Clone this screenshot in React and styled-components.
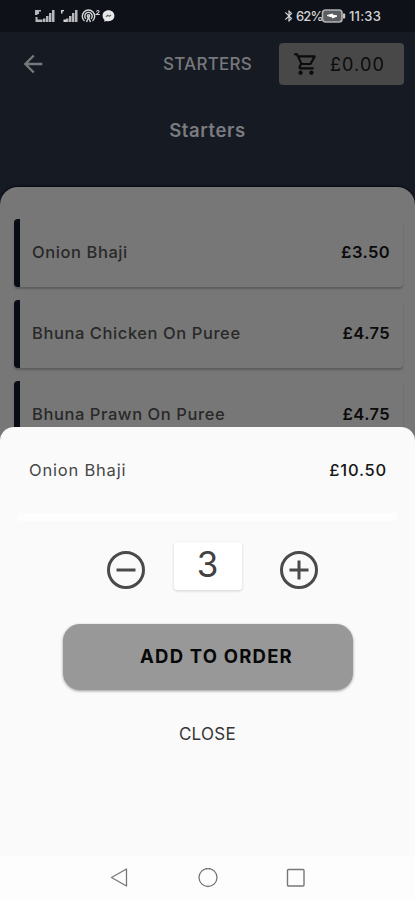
import React, { useState } from 'react';
import styled, { createGlobalStyle } from 'styled-components';
import { MdArrowBack, MdOutlineShoppingCart, MdBluetooth } from 'react-icons/md';

const GlobalStyle = createGlobalStyle`
  * {
    box-sizing: border-box;
  }

  body {
    margin: 0;
    font-family: Inter, "Liberation Sans", sans-serif;
  }

  button {
    font-family: inherit;
    border: none;
    padding: 0;
    cursor: pointer;
  }
`;

const Screen = styled.div`
  position: relative;
  width: 415px;
  height: 900px;
  overflow: hidden;
  background-color: #161a23;
`;

const StatusBar = styled.div`
  display: flex;
  justify-content: space-between;
  align-items: center;
  height: 32px;
  padding: 0 31px 0 34px;
  background-color: #0e1118;
  color: #d4d5d7;
`;

const StatusGroup = styled.div`
  display: flex;
  align-items: center;
`;

const StatusText = styled.span`
  width: ${props => props.$width};
  font-size: 13px;
  line-height: 16px;
  font-weight: 500;
  letter-spacing: ${props => props.$spacing};
  white-space: nowrap;
`;

const Navbar = styled.nav`
  display: flex;
  align-items: center;
  height: 64px;
  padding: 0 11px 0 19px;
  color: #77787c;
`;

const BackButton = styled.button`
  display: flex;
  background: none;
  color: #77787c;
`;

const NavTitle = styled.span`
  flex: 1;
  padding-right: 27px;
  text-align: right;
  font-size: 17px;
  font-weight: 500;
  letter-spacing: 0.25px;
`;

const CartButton = styled.button`
  display: flex;
  align-items: center;
  gap: 11px;
  width: 125px;
  height: 42px;
  padding-left: 14px;
  border-radius: 4px;
  background-color: #484848;
  color: #0b0b0c;
  font-size: 18px;
  letter-spacing: 1.1px;
`;

const PageTitle = styled.h2`
  height: 91px;
  margin: 0;
  padding-top: 22px;
  text-align: center;
  font-size: 18.5px;
  line-height: 24px;
  font-weight: 600;
  letter-spacing: 0.6px;
  color: #7b7c80;
`;

const Menu = styled.div`
  display: flex;
  flex-direction: column;
  gap: 13px;
  height: 713px;
  padding: 32px 12px 0 14px;
  border-radius: 18px 18px 0 0;
  background-color: #777777;
  box-shadow: 0 -1px 2px #060910;
`;

const MenuItem = styled.div`
  display: flex;
  align-items: center;
  justify-content: space-between;
  height: 68px;
  padding: 0 13px 3px 12px;
  border-left: 6px solid #080c15;
  border-radius: 4px;
  background-color: #777777;
  box-shadow: 0 2px 2px rgba(0, 0, 0, 0.22);
`;

const ItemName = styled.span`
  font-size: 16.5px;
  font-weight: ${props => (props.$dimmed ? 500 : 400)};
  letter-spacing: ${props => (props.$dimmed ? '0.58px' : '0.8px')};
  color: ${props => (props.$dimmed ? '#292929' : '#464646')};
`;

const ItemPrice = styled.span`
  font-size: 16.5px;
  font-weight: ${props => (props.$dimmed ? 600 : 500)};
  letter-spacing: ${props => (props.$dimmed ? '0.4px' : '0.8px')};
  color: ${props => (props.$dimmed ? '#0b0b0b' : '#171717')};
`;

const Sheet = styled.div`
  position: absolute;
  left: 0;
  right: 0;
  bottom: 0;
  height: 473px;
  display: flex;
  flex-direction: column;
  align-items: center;
  border-radius: 14px 14px 0 0;
  background-color: #fafafa;
`;

const SheetHeader = styled.div`
  display: flex;
  align-items: center;
  justify-content: space-between;
  width: 100%;
  height: 86px;
  padding: 0 28px 0 29px;
`;

const Divider = styled.div`
  width: 379px;
  height: 8px;
  background-color: #fdfdfd;
`;

const Stepper = styled.div`
  display: flex;
  align-items: center;
  justify-content: space-between;
  width: 213px;
  height: 98px;
  margin: 0 0 5px 10px;
`;

const StepButton = styled.button`
  display: flex;
  background: none;
`;

const Quantity = styled.div`
  width: 68px;
  height: 48px;
  margin: 0 0 8px -10px;
  border-radius: 3px;
  background-color: #ffffff;
  box-shadow: 0 1px 3px rgba(0, 0, 0, 0.17);
  text-align: center;
  font-size: 35px;
  line-height: 44px;
  color: #414141;
`;

const AddButton = styled.button`
  width: 290px;
  height: 66px;
  padding: 0 0 2px 18px;
  border-radius: 17px;
  background-color: #989898;
  box-shadow: 0 1px 3px rgba(0, 0, 0, 0.4);
  font-size: 18.5px;
  font-weight: 700;
  letter-spacing: 1.2px;
  color: #080808;
`;

const CloseButton = styled.button`
  margin-top: 34px;
  background: none;
  font-size: 17px;
  line-height: 20px;
  letter-spacing: 0.3px;
  color: #363636;
`;

const SystemNav = styled.div`
  display: flex;
  align-items: center;
  justify-content: space-between;
  width: 100%;
  height: 44px;
  margin-top: auto;
  padding: 0 109px;
  background-color: #fdfdfd;
`;

const SignalIcon = ({ small }) => (
  <svg width={small ? 24 : 23} height="16" viewBox={small ? '0 0 24 16' : '0 0 23 16'} fill="currentColor">
    {small ? (
      <path d="M4 2h3v1.2H5.500V5.500H4zM6.500 11.500h3v2.500h-3z" />
    ) : (
      <path d="M1 2h6v1.500H5V6H3.500V7H1zM1.500 9h2v2.500h5V14H1.500z" opacity="0.85" />
    )}
    <path d="M9 10.500h2.500V14H9zM12 8h2.500v6H12zM15 5h2.400v9H15zM18 2h2.500v12H18z" opacity="0.85" />
  </svg>
);

const HotspotIcon = () => (
  <svg width="21" height="16" viewBox="0 0 21 16" fill="none" stroke="currentColor" strokeWidth="1.4">
    <path d="M3.500 13A6.200 6.200 0 1 1 11.500 13M5 10.800A3.700 3.700 0 1 1 10 10.800" />
    <circle cx="7.500" cy="8" r="1.200" />
    <path d="M5.500 14L7.500 9.500L9.500 14" />
    <path d="M15.300 3.500Q16.800 1.700 18 3Q18.500 4 15.300 6.500H18.800" strokeWidth="1.100" />
  </svg>
);

const MessengerIcon = () => (
  <svg width="13" height="14" viewBox="0 0 13 14">
    <path d="M6.500 1.200C3 1.200.6 3.500.6 6.700c0 1.700.7 3 1.800 4v2l1.900-.8c4.500 1 8.100-1.300 8.100-5.200 0-3.100-2.400-5.500-5.900-5.500z" fill="#e8e8e9" />
    <path d="M4 7.700L5.700 6.200L7.300 7.300L9 6" fill="none" stroke="#65676b" strokeWidth="1.300" />
  </svg>
);

const BatteryIcon = () => (
  <svg width="28" height="14" viewBox="0 0 28 14">
    <rect x="1.500" y="1" width="19.500" height="12" rx="3" fill="#5b5d61" stroke="#aeb0b3" strokeWidth="1.700" />
    <path d="M22 4.500h1.200q1 0 1 1v3q0 1-1 1H22z" fill="#c5c6c8" />
    <path d="M6 6.500L11.500 5V6L16 7L11.500 9V8z" fill="#ffffff" stroke="#ffffff" />
  </svg>
);

const CircleIcon = ({ plus }) => (
  <svg width="40" height="40" viewBox="0 0 40 40" fill="none" stroke="#4a4a4a" strokeWidth="3">
    <circle cx="20" cy="20" r="17.500" />
    <path d="M10.500 20H29.500" />
    {plus && <path d="M20 10.500V29.500" />}
  </svg>
);

const menuItems = [
  { id: 1, name: 'Onion Bhaji', price: '£3.50' },
  { id: 2, name: 'Bhuna Chicken On Puree', price: '£4.75' },
  { id: 3, name: 'Bhuna Prawn On Puree', price: '£4.75' },
];

function App() {
  const [quantity, setQuantity] = useState(3);
  const [open, setOpen] = useState(true);

  return (
    <Screen>
      <GlobalStyle />
      <StatusBar>
        <StatusGroup>
          <SignalIcon />
          <SignalIcon small />
          <HotspotIcon />
          <MessengerIcon />
        </StatusGroup>
        <StatusGroup>
          <MdBluetooth size={14} />
          <StatusText $width="25px" $spacing="-0.9px">62%</StatusText>
          <BatteryIcon />
          <StatusText $width="35px" $spacing="0.2px">11:33</StatusText>
        </StatusGroup>
      </StatusBar>
      <Navbar>
        <BackButton aria-label="Back"><MdArrowBack size={28} /></BackButton>
        <NavTitle>STARTERS</NavTitle>
        <CartButton>
          <MdOutlineShoppingCart size={26} />
          £0.00
        </CartButton>
      </Navbar>
      <PageTitle>Starters</PageTitle>
      <Menu>
        {menuItems.map(item => (
          <MenuItem key={item.id}>
            <ItemName $dimmed>{item.name}</ItemName>
            <ItemPrice $dimmed>{item.price}</ItemPrice>
          </MenuItem>
        ))}
      </Menu>
      {open && (
        <Sheet>
          <SheetHeader>
            <ItemName>Onion Bhaji</ItemName>
            <ItemPrice>£{(quantity * 3.5).toFixed(2)}</ItemPrice>
          </SheetHeader>
          <Divider />
          <Stepper>
            <StepButton aria-label="Remove one" onClick={() => setQuantity(Math.max(1, quantity - 1))}>
              <CircleIcon />
            </StepButton>
            <Quantity>{quantity}</Quantity>
            <StepButton aria-label="Add one" onClick={() => setQuantity(quantity + 1)}>
              <CircleIcon plus />
            </StepButton>
          </Stepper>
          <AddButton>ADD TO ORDER</AddButton>
          <CloseButton onClick={() => setOpen(false)}>CLOSE</CloseButton>
          <SystemNav>
            <svg width="20" height="20" viewBox="0 0 20 20" fill="none" stroke="#777777" strokeWidth="1.300" strokeLinejoin="round">
              <path d="M2.500 9.500L17.500 1V18z" />
            </svg>
            <svg width="20" height="20" viewBox="0 0 20 20" fill="none" stroke="#777777" strokeWidth="1.300">
              <circle cx="10" cy="9.500" r="9" />
            </svg>
            <svg width="20" height="20" viewBox="0 0 20 20" fill="none" stroke="#777777" strokeWidth="1.400">
              <rect x="1.500" y="1.500" width="16.500" height="16.500" rx="1" />
            </svg>
          </SystemNav>
        </Sheet>
      )}
    </Screen>
  );
}

export default App;
